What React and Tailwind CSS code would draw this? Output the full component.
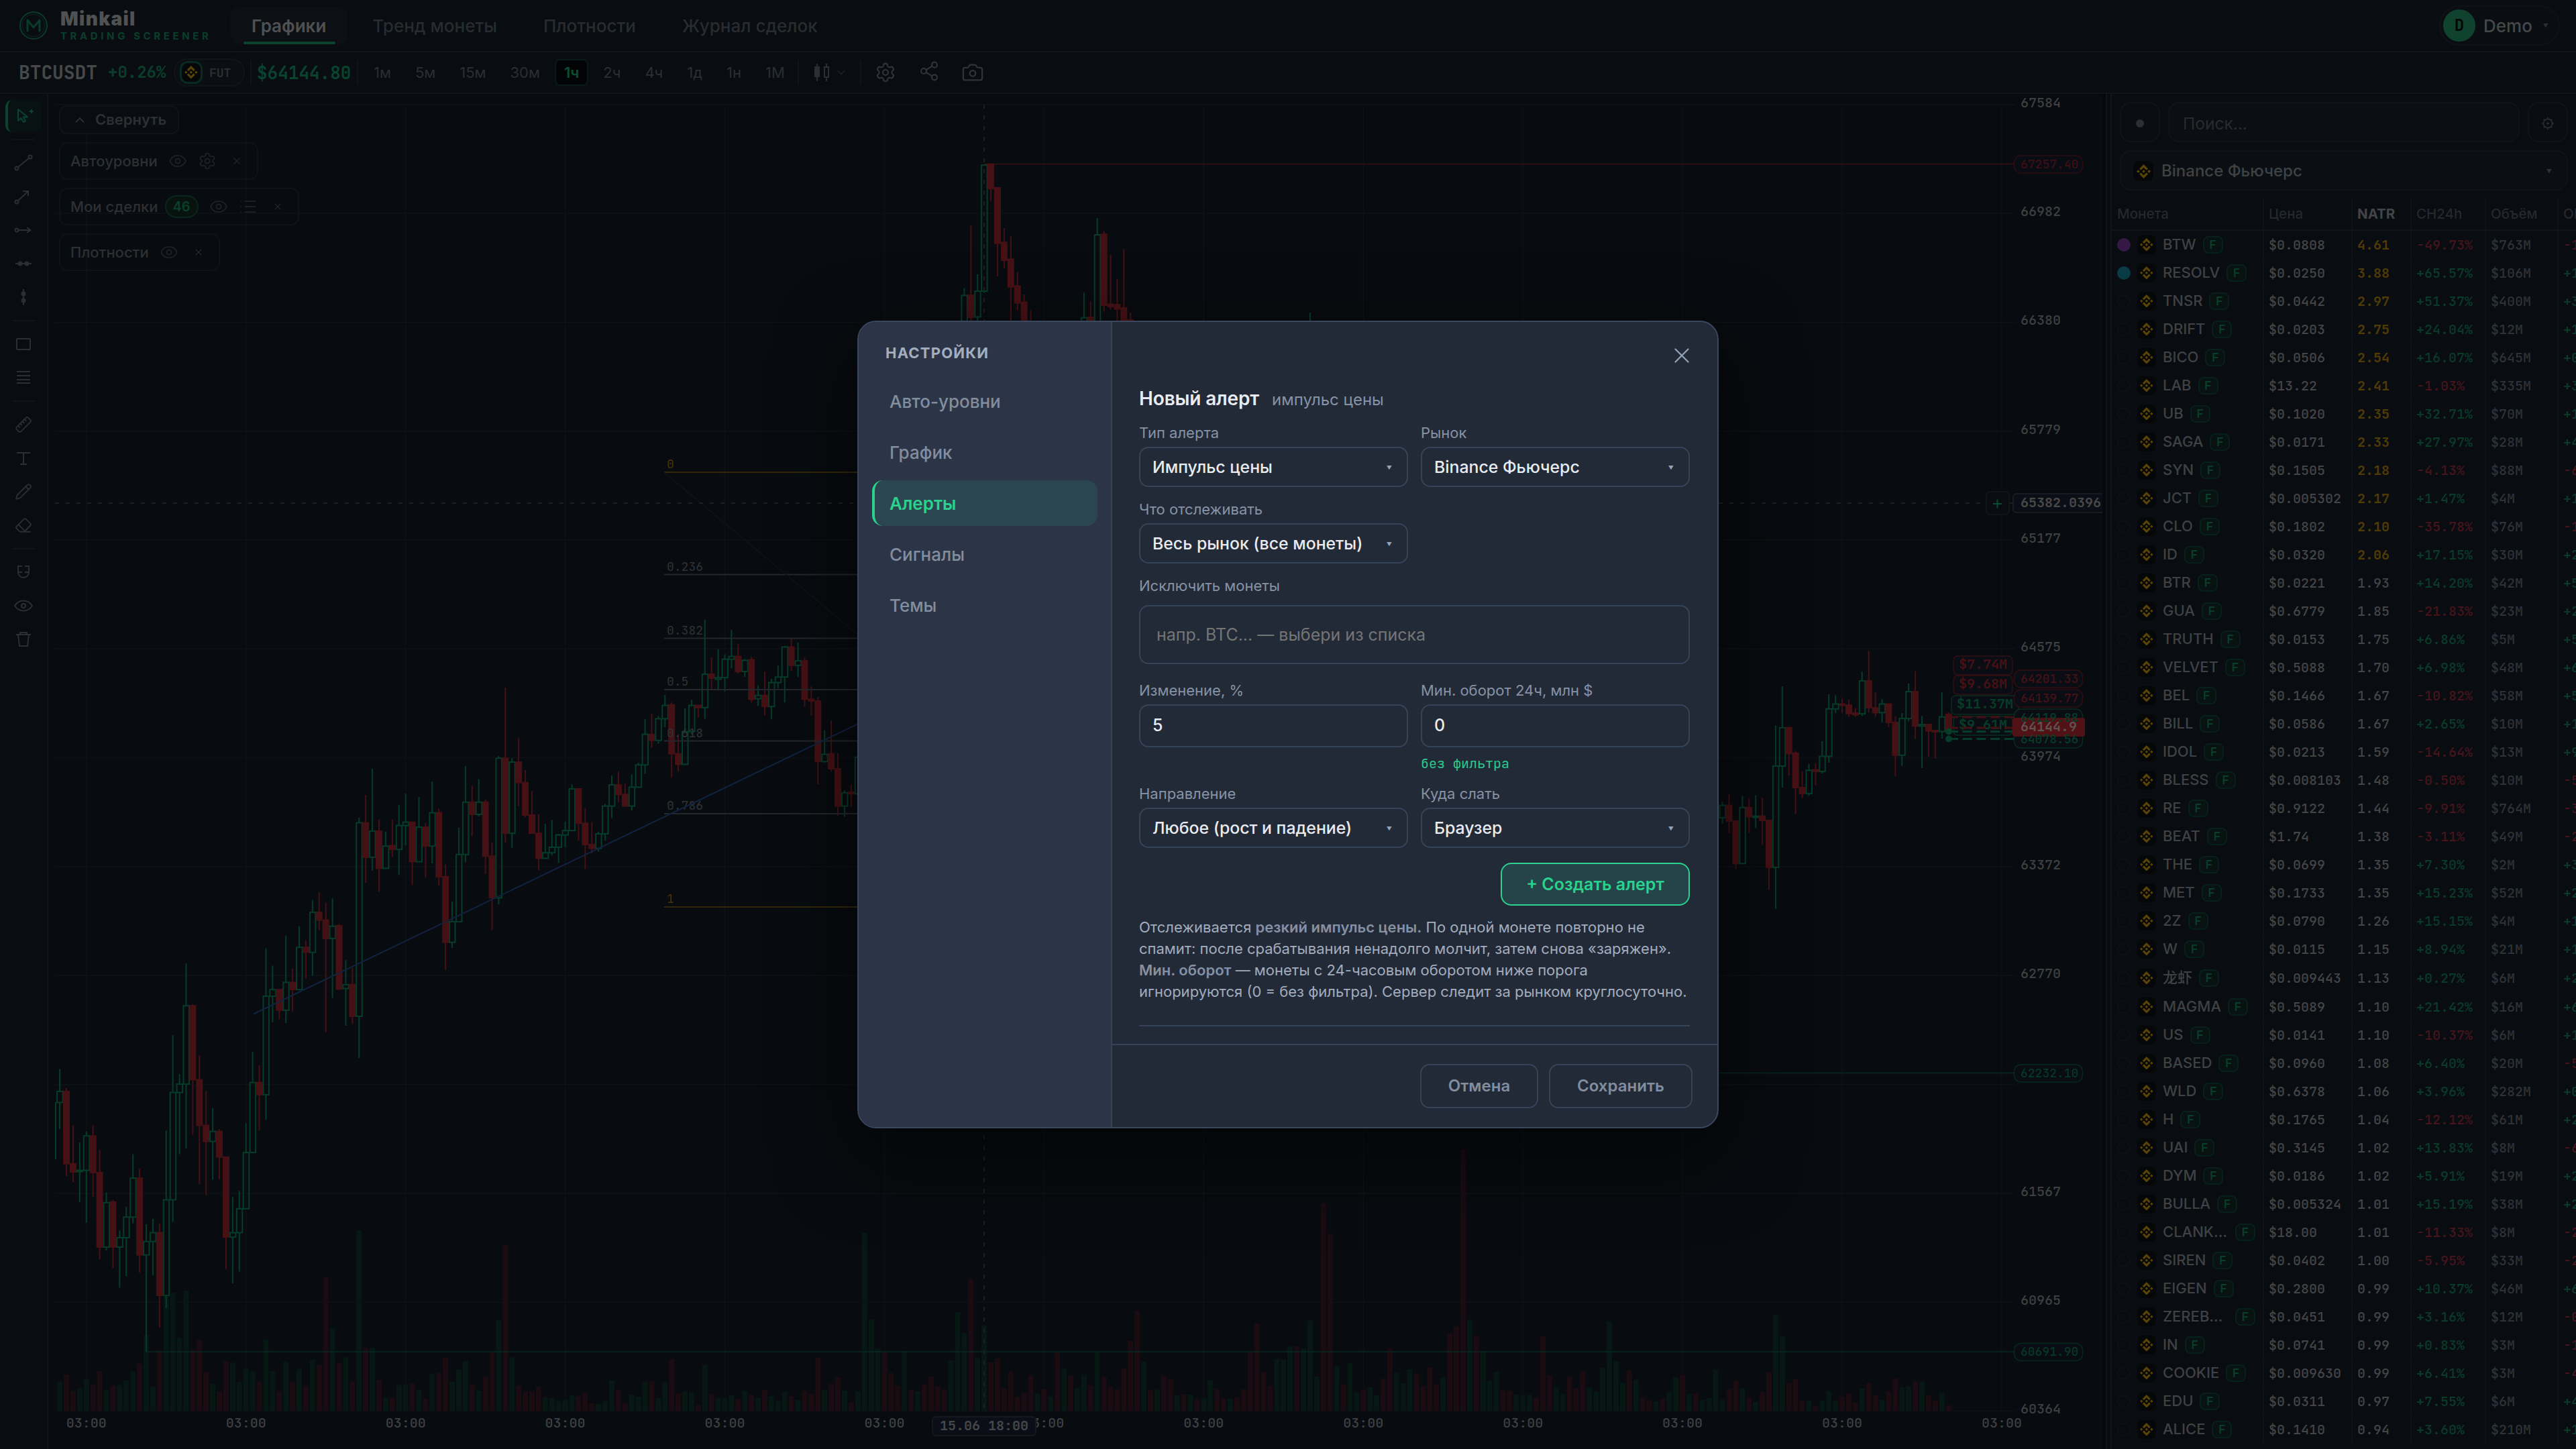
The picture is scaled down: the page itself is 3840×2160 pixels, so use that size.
import React from 'react'
import { Settings, Share2, Camera, ChevronDown, ChevronUp, Eye, List, X, Ruler, Pencil, Eraser } from 'lucide-react'
import { SiBinance } from 'react-icons/si'

const MONO = "font-['JetBrains_Mono','DejaVu_Sans_Mono',monospace]"
const MONO_FAMILY = "'JetBrains Mono', 'DejaVu Sans Mono', monospace"

const GREEN = '#063d29'
const RED = '#461115'

const TABS = ['Графики', 'Тренд монеты', 'Плотности', 'Журнал сделок']
const TIMEFRAMES = ['1м', '5м', '15м', '30м', '1ч', '2ч', '4ч', '1д', '1н', '1М']

// name, price, natr, change, volume, open interest
const COINS = [
  ['BTW', '$0.0808', '4.61', '-49.73%', '$763M', '-1.2%'],
  ['RESOLV', '$0.0250', '3.88', '+65.57%', '$106M', '+1.8%'],
  ['TNSR', '$0.0442', '2.97', '+51.37%', '$400M', '+3.1%'],
  ['DRIFT', '$0.0203', '2.75', '+24.04%', '$12M', '+1.4%'],
  ['BICO', '$0.0506', '2.54', '+16.07%', '$645M', '+0.6%'],
  ['LAB', '$13.22', '2.41', '-1.03%', '$335M', '+3.3%'],
  ['UB', '$0.1020', '2.35', '+32.71%', '$70M', '+1.1%'],
  ['SAGA', '$0.0171', '2.33', '+27.97%', '$28M', '+4.2%'],
  ['SYN', '$0.1505', '2.18', '-4.13%', '$88M', '-6.0%'],
  ['JCT', '$0.005302', '2.17', '+1.47%', '$4M', '+1.5%'],
  ['CLO', '$0.1802', '2.10', '-35.78%', '$76M', '-1.9%'],
  ['ID', '$0.0320', '2.06', '+17.15%', '$30M', '+2.2%'],
  ['BTR', '$0.0221', '1.93', '+14.20%', '$42M', '+5.4%'],
  ['GUA', '$0.6779', '1.85', '-21.83%', '$23M', '+2.7%'],
  ['TRUTH', '$0.0153', '1.75', '+6.86%', '$5M', '+5.1%'],
  ['VELVET', '$0.5088', '1.70', '+6.98%', '$48M', '+6.3%'],
  ['BEL', '$0.1466', '1.67', '-10.82%', '$58M', '+5.8%'],
  ['BILL', '$0.0586', '1.67', '+2.65%', '$10M', '+1.0%'],
  ['IDOL', '$0.0213', '1.59', '-14.64%', '$13M', '+9.2%'],
  ['BLESS', '$0.008103', '1.48', '-0.50%', '$10M', '-5.5%'],
  ['RE', '$0.9122', '1.44', '-9.91%', '$764M', '-3.6%'],
  ['BEAT', '$1.74', '1.38', '-3.11%', '$49M', '-2.4%'],
  ['THE', '$0.0699', '1.35', '+7.30%', '$2M', '+3.9%'],
  ['MET', '$0.1733', '1.35', '+15.23%', '$52M', '+2.1%'],
  ['2Z', '$0.0790', '1.26', '+15.15%', '$4M', '+1.3%'],
  ['W', '$0.0115', '1.15', '+8.94%', '$21M', '+1.7%'],
  ['龙虾', '$0.009443', '1.13', '+0.27%', '$6M', '+2.0%'],
  ['MAGMA', '$0.5089', '1.10', '+21.42%', '$16M', '+6.6%'],
  ['US', '$0.0141', '1.10', '-10.37%', '$6M', '+1.2%'],
  ['BASED', '$0.0960', '1.08', '+6.40%', '$20M', '-5.0%'],
  ['WLD', '$0.6378', '1.06', '+3.96%', '$282M', '+0.4%'],
  ['H', '$0.1765', '1.04', '-12.12%', '$61M', '+2.5%'],
  ['UAI', '$0.3145', '1.02', '+13.83%', '$8M', '-6.1%'],
  ['DYM', '$0.0186', '1.02', '+5.91%', '$19M', '+2.3%'],
  ['BULLA', '$0.005324', '1.01', '+15.19%', '$38M', '+2.8%'],
  ['CLANKER', '$18.00', '1.01', '-11.33%', '$8M', '-2.2%'],
  ['SIREN', '$0.0402', '1.00', '-5.95%', '$33M', '-2.9%'],
  ['EIGEN', '$0.2800', '0.99', '+10.37%', '$46M', '+6.0%'],
  ['ZEREBRO', '$0.0451', '0.99', '+3.16%', '$12M', '-0.7%'],
  ['IN', '$0.0741', '0.99', '+0.83%', '$3M', '-1.8%'],
  ['COOKIE', '$0.009630', '0.99', '+6.41%', '$3M', '-4.4%'],
  ['EDU', '$0.0311', '0.97', '+7.55%', '$6M', '+4.0%'],
  ['ALICE', '$0.1410', '0.94', '+3.60%', '$210M', '+1.6%'],
]

// Candles come in blocks with their own vertical scale: [up, high, top, bottom, low]
const EARLY = [
  [1,885,925,945,993],[0,919,925,1055,1077],[0,986,1055,1070,1088],[1,1017,1067,1069,1124],[1,997,1005,1067,1161],
  [0,985,1005,1071,1115],[0,1030,1071,1205,1227],[1,1107,1125,1205,1211],[0,1120,1124,1205,1243],[1,1175,1188,1205,1278],
  [1,1133,1151,1188,1257],[1,1038,1081,1151,1162],[0,1064,1081,1219,1251],[1,1164,1195,1219,1393],[1,1154,1179,1195,1256],
  [0,1162,1179,1292,1350],[1,995,1120,1292,1315],[1,824,927,1120,1160],[1,894,912,927,1038],[1,695,771,912,1028],
  [0,768,771,904,1003],[0,860,904,986,1092],[0,924,986,1015,1112],[1,955,997,1015,1084],[0,993,997,1043,1083],
  [0,1042,1043,1187,1244],[1,1115,1179,1187,1270],[1,1104,1136,1179,1249],[1,982,1035,1136,1136],[1,854,909,1035,1035],
  [0,878,909,931,995],[1,668,754,931,976],[1,699,742,754,801],[0,742,742,779,795],[1,645,729,779,802],
  [0,704,729,742,781],[1,628,666,742,742],[0,653,666,675,722],[1,581,603,675,717],[0,567,603,617,635],
  [0,586,617,650,819],[1,578,628,650,757],[0,624,627,741,741],[1,689,733,740,807],[0,703,733,790,804],
  [1,433,442,790,865],[0,392,442,504,550],[1,345,457,504,528],[0,436,457,524,566],[1,458,484,524,524],
  [0,436,483,490,504],[1,410,447,490,536],[1,390,441,447,483],[0,441,441,512,554],[1,396,450,512,512],
  [0,442,450,484,540],[1,368,424,484,515],[0,417,424,539,555],[0,517,539,657,707],[1,584,620,657,667],
  [1,451,499,620,620],[1,340,405,499,513],[0,375,405,427,466],[1,364,405,427,431],[0,400,405,502,534],
  [0,478,502,577,635],[1,322,326,577,589],[0,199,326,461,478],[1,326,333,461,487],[0,290,333,370,412],
  [0,347,370,428,432],[0,385,428,461,461],[0,427,461,506,527],[1,444,496,506,506],[1,437,486,496,501],
  [1,462,464,486,514],[1,440,456,464,486],[1,373,381,456,456],[0,380,381,443,474],[0,416,443,481,525],
  [0,441,481,488,497],[1,458,462,488,494],[1,408,412,462,474],[1,357,374,412,434],[0,350,374,391,405],
  [0,372,391,412,412],[1,355,378,412,420],[1,334,338,378,378],[1,256,283,338,354],[0,246,283,294,308],
  [1,250,255,294,300],[1,212,231,255,270],[0,226,230,318,361],[0,283,318,337,350],[1,236,278,337,337],
  [1,221,231,278,283],[0,230,231,235,253],[1,77,175,235,255],[0,145,175,182,203],[1,130,181,184,203],
  [1,139,148,181,206],[1,95,143,148,164],[0,120,143,170,174],[1,148,150,170,180],[0,144,149,220,226],
  [1,195,213,219,232],[0,170,213,233,249],[1,183,190,233,256],[1,159,180,190,200],[1,124,126,180,226],
  [0,110,126,159,169],[1,118,151,159,180],[0,145,151,220,233],[0,197,220,223,249],[0,216,223,332,373],
  [1,276,319,332,334],[0,258,318,345,350],[0,317,345,412,430],[1,384,388,412,431],[0,373,387,390,414],
  [1,324,324,390,390],
]

const PEAK = [
  [1,628,661,800,800],[0,349,660,759,800],[1,567,642,757,800],[1,75,78,642,650],[0,73,74,184,239],
  [0,178,179,428,575],[0,360,424,504,540],[0,397,499,623,800],[0,557,619,695,728],[0,657,691,800,800],[0,729,800,800,800],
]

const PEAK_2 = [
  [1,650,761,800,800],[0,687,759,800,800],[1,315,390,800,800],[0,374,388,705,734],[0,479,700,711,724],
  [0,589,702,722,800],[0,454,717,800,800],[0,738,771,800,800],
]

const LATE = [
  [1,367,374,397,408],[0,353,374,403,426],[0,403,403,482,492],[1,357,378,482,482],[0,362,378,395,425],
  [1,355,394,396,416],[0,360,394,402,447],[0,402,402,489,531],[1,226,301,489,566],[1,153,230,301,341],
  [0,228,230,278,319],[0,273,277,341,390],[0,311,341,352,361],[1,297,309,352,356],[0,296,308,311,337],
  [1,255,283,311,315],[1,168,195,283,295],[1,170,186,195,203],[0,176,186,188,203],[0,178,188,204,210],
  [0,194,203,206,210],[1,126,143,204,208],[0,87,143,193,202],[0,164,193,202,210],[1,177,186,202,220],
  [0,185,186,220,229],[0,209,220,281,320],[1,203,213,281,301],[1,148,163,213,218],[0,125,163,227,251],
  [1,208,224,227,305],[0,223,224,236,284],[0,235,235,237,287],[1,164,210,237,250],[0,202,205,232,232],
]

const BLOCKS = [
  { start: 0, origin: 860, scale: 0.82908, rows: EARLY },
  { start: 136, origin: 220, scale: 0.33333, rows: PEAK },
  { start: 154, origin: 220, scale: 0.33333, rows: PEAK_2 },
  { start: 250, origin: 900, scale: 0.80357, rows: LATE },
]

const VOLUME_EARLY = [
  1446,1433,1463,1458,1441,1451,1427,1461,1453,1452,1444,1428,1414,1362,1455,1390,1293,1286,1367,1282,1388,1371,1429,1449,1463,
  1409,1412,1446,1423,1427,1446,1370,1427,1463,1410,1447,1423,1453,1406,1415,1258,1350,1412,1402,1446,1174,1385,1385,1443,1475,
  1474,1452,1451,1449,1461,1477,1432,1430,1402,1446,1424,1409,1452,1462,1436,1393,1335,1200,1402,1453,1464,1464,1455,1474,1475,
  1481,1478,1470,1472,1466,1485,1486,1481,1444,1461,1484,1469,1473,1446,1445,1475,1447,1406,1467,1464,1465,1488,1416,1468,1475,
  1476,1470,1477,1463,1470,1475,1461,1472,1481,1464,1472,1479,1462,1467,1403,1461,1450,1438,
]

const VOLUME_MID = 'g1180 r1232 g1184 g475 g862 g991 r1010 r1101 r1159 g1006 r1176 g1184 r1155 r1117 r1161 r1175 g1045 g828 g922 r681 g1035 g888 r1054 r1036 r1169 r1094 r1208 r1188 r1112 g1192 r1174 g1206 r1010 g1082 r1112 g1170 g1109 r1157 g1008 r1119 r1161 r1174 r1081 r958 r824 g1052 r1178 g1175 r1114 r1129 g1200 r1197 g1198 r1221 g1212 g1134 r1172 r1217 g1217 r1210 r1174 r1007 r880 r1096 r1159 g1037 g1042 g983 r982 g993 g867 g1118 r342 r479 g1070 r1152 g1056 g1188 r1175 g1165 g1200 r1126 r992 g1100 g1148 g1085 r1107 r1160 r1076 r1152 g1121 r924 r894 r103 g863 r934 g1006 g1137 g1096 r1179 r1182 g1199 g1200 g1198 r1212 r936 r1112 g1164 g1196 r1118 r1169 r1095 g1167 g1185 g1078 g873 g1048 g1145 r1089 g1132 r1210 r1223 g1227 r1217 g1185 g1121 r1109 g1196 r1194 g1221 g1214'

const VOLUME_LATE = 'g1420 g1476 r1456 r1440 g1455 r1471 g1480 r1461 r1425 g1318 g1358 r1445 r1437 r1478 g1477 r1487 g1478 g1460 g1478 r1470 r1465 r1481 g1455 r1445 r1467 g1476 r1460 r1436 g1452 g1451 r1441 g1442 r1468 r1477 g1463 r1486'

const parseVolume = (text, base, scale) =>
  text.split(' ').map((v) => ({ up: v[0] === 'g', h: (base - Number(v.slice(1))) * scale }))

const VOLUMES = [
  ...VOLUME_EARLY.map((v, i) => ({ up: EARLY[i][0] === 1, h: (1499 - v) * 0.829 })),
  ...parseVolume(VOLUME_MID, 1272, 0.3333),
  ...parseVolume(VOLUME_LATE, 1497, 0.8036),
]

const PRICES = ['67584', '66982', '66380', '65779', '65177', '64575', '63974', '63372', '62770', null, '61567', '60965', '60364']
const FIBS = [
  ['0', 704, '#33290a'], ['0.236', 856.5, '#24272b'], ['0.382', 951.5, '#24272b'], ['0.5', 1028, '#24272b'],
  ['0.618', 1104.5, '#24272b'], ['0.786', 1213, '#24272b'], ['1', 1352, '#33290a'],
]
const SIZE_TAGS = [
  ['$7.74M', 2912, 978, 88, RED], ['$9.68M', 2912, 1007, 88, RED], ['$11.37M', 2909, 1037, 100, GREEN], ['$9.61M', 2912, 1068, 88, GREEN],
]
const PRICE_TAGS = [
  ['67257.40', 245, RED, 0.85], ['64201.33', 1012, RED, 1], ['64139.77', 1041, RED, 1], ['64119.88', 1070, GREEN, 1],
  ['64078.56', 1102, GREEN, 1], ['62232.10', 1600, GREEN, 0.9], ['60691.90', 2015.5, GREEN, 0.9],
]

const candleX = (i) => 89.1 + i * 9.914
const gridX = (k) => 128.8 + k * 237.93
const gridY = (k) => 155.8 + k * 162.3

const Candle = ({ x, row, origin, scale }) => {
  const [up, high, top, bottom, low] = row
  const y = (v) => origin + v * scale
  const color = up ? GREEN : RED
  const height = Math.max(y(bottom) - y(top), 2)
  return (
    <g stroke={color} strokeWidth="2">
      <path d={`M${x} ${y(high)}V${y(top)}M${x} ${y(bottom)}V${y(low)}`} />
      {up
        ? <rect x={x - 4} y={y(top)} width="8.5" height={height} fill="none" />
        : <rect x={x - 5} y={y(top) - 1} width="10" height={height + 2} fill={color} stroke="none" />}
    </g>
  )
}

const Chart = () => (
  <svg className="block" width="3067" height="2020" viewBox="72 140 3067 2020" fontFamily={MONO_FAMILY}>
    <g stroke="#0e1216" strokeWidth="1.5">
      {PRICES.map((_, k) => <path key={k} d={`M82 ${gridY(k)}H3004`} />)}
      {Array.from({ length: 13 }, (_, k) => <path key={k} d={`M${gridX(k)} 157V2103`} />)}
    </g>

    {VOLUMES.map((v, i) => (
      <rect key={i} x={candleX(i) - 4} y={2103.5 - v.h} width="8" height={v.h} fill={v.up ? '#071714' : '#1a0c11'} />
    ))}

    <path d="M1467 244.5H3004" stroke={RED} strokeWidth="1.5" opacity="0.8" />
    <path d="M1400 1599.5H3004M218 2015H3004" stroke="#082a20" strokeWidth="1.5" />
    <path d="M83 1643V1728" stroke={GREEN} strokeWidth="2" />

    {BLOCKS.map((b) => b.rows.map((row, i) => (
      <Candle key={b.start + i} x={candleX(b.start + i)} row={row} origin={b.origin} scale={b.scale} />
    )))}
    <path d="M1953 466V490" stroke={GREEN} strokeWidth="2" />

    {FIBS.map(([label, y, color]) => (
      <g key={label}>
        <path d={`M990 ${y}H1400`} stroke={color} strokeWidth="2" />
        <text x="994" y={y - 6} fontSize="18" fill={label === '1' || label === '0' ? '#43350c' : '#303336'}>{label}</text>
      </g>
    ))}
    <path d="M990 704L1300 964" stroke="#101417" strokeWidth="1.5" />
    <path d="M378 1511.5L1300 1069" stroke="#12233f" strokeWidth="2" />

    {/* crosshair */}
    <path d="M1467 156V2103" stroke="#1c2024" strokeWidth="2" strokeDasharray="6 10" />
    <path d="M82 750H3004" stroke="#1c2024" strokeWidth="2" strokeDasharray="6 10" />

    {SIZE_TAGS.map(([label, x, y, w, color]) => (
      <g key={label}>
        <rect x={x} y={y} width={w} height="28" rx="6" fill="#0c0e15" fillOpacity="0.7" stroke={color} strokeOpacity="0.65" strokeWidth="1.5" />
        <text x={x + 8} y={y + 18.5} fontSize="20" fontWeight="600" fill={color}>{label}</text>
      </g>
    ))}

    <g stroke={RED} strokeWidth="3" strokeDasharray="14 6.7">
      <path d="M2905 1069H3004M2905 1085H3004" />
      <path d="M2905 1090.5H3004M2905 1101.5H3004" stroke={GREEN} />
    </g>
    <rect x="2900" y="1064" width="10" height="26" rx="4" fill={RED} />
    <circle cx="2905" cy="1090.5" r="5" fill={GREEN} />
    <circle cx="2905" cy="1101.5" r="5" fill={GREEN} />

    {PRICES.map((p, k) => p && <text key={p} x="3012" y={gridY(k) + 4} fontSize="20" fontWeight="500" fill="#3e4043">{p}</text>)}

    {PRICE_TAGS.map(([label, y, color, opacity]) => (
      <rect key={label} x="3002.5" y={y - 13} width="102" height="26" rx="10" fill="#0a0d13" stroke={color} strokeOpacity="0.65" strokeWidth="1.5" opacity={opacity} />
    ))}
    <rect x="3000" y="1070" width="108" height="28" rx="4" fill="#511216" />
    {PRICE_TAGS.map(([label, y, color, opacity]) => (
      <text key={label} x="3012" y={y + 5.500} fontSize="18" fontWeight="500" fill={color} opacity={opacity}>{label}</text>
    ))}
    <text x="3012" y="1090" fontSize="20" fontWeight="600" fill="#5f5152">64144.9</text>

    <rect x="2961" y="733" width="34" height="34" rx="6" fill="#090d11" stroke="#10151a" strokeWidth="2" />
    <path d="M2971 751H2984M2977.500 744.500V757.500" stroke="#0b4a33" strokeWidth="2" />
    <rect x="3001" y="736" width="150" height="28" rx="5" fill="#0c0e17" stroke="#171b22" strokeWidth="2" />
    <text x="3012" y="756" fontSize="20" fontWeight="600" fill="#484949">65382.0396</text>
    <rect x="3134" y="140" width="6" height="2020" fill="#06090c" />

    {Array.from({ length: 13 }, (_, k) => (
      <text key={k} x={gridX(k)} y="2128" fontSize="20" fontWeight="500" textAnchor="middle" fill="#3e4043">03:00</text>
    ))}
    <rect x="1390" y="2112" width="154" height="28" rx="5" fill="#0c0e17" stroke="#14181f" strokeWidth="2" />
    <text x="1467" y="2132" fontSize="20" textAnchor="middle" fontWeight="600" fill="#464747">15.06 18:00</text>
  </svg>
)

const ExchangeIcon = ({ className }) => (
  <span className={`flex shrink-0 items-center justify-center bg-[#060708] text-[#594405] ${className}`}>
    <SiBinance className="h-[70%] w-[70%]" />
  </span>
)

const Header = () => (
  <header className="flex h-[78px] items-center border-b-2 border-[#10151a] bg-[#090d11] pl-7 pr-6">
    <svg className="h-[44px] w-[44px]" viewBox="0 0 44 44" fill="none" stroke="#093b29">
      <circle cx="22" cy="22" r="20" strokeWidth="2" />
      <circle cx="22" cy="22" r="16.500" strokeWidth="1" opacity="0.6" />
      <path d="M13 30V14L22 25L31 14V30" strokeWidth="3" strokeLinejoin="round" strokeLinecap="round" />
    </svg>
    <div className="ml-[18px] w-[238px]">
      <div className="text-[28px] font-black leading-[28px] tracking-[1.300px] text-[#505152]">Minkail</div>
      <div className="mt-[4px] whitespace-nowrap text-[15px] font-bold leading-4 tracking-[4.600px] text-[#093f2a]">TRADING SCREENER</div>
    </div>
    <nav className="ml-[15px] flex gap-[5px]">
      {TABS.map((tab, i) => (
        <div
          key={tab}
          className={`relative flex h-14 items-center rounded-xl px-8 text-[26px] ${i === 0 ? 'bg-[#0c1014] font-semibold text-[#4f5051]' : 'font-medium text-[#282b2f]'}`}
        >
          {tab}
          {i === 0 && <span className="absolute bottom-0 left-5 right-[18px] h-1 rounded-full bg-[#0b432e]" />}
        </div>
      ))}
    </nav>
    <div className="ml-auto flex h-[60px] w-[180px] items-center rounded-full border-2 border-[#0e1317] bg-[#0a0e12] pl-1">
      <span className={`flex h-12 w-12 items-center justify-center rounded-full bg-[#10432f] text-[24px] font-bold text-[#030504] ${MONO}`}>D</span>
      <span className="ml-3 text-[26px] font-medium text-[#46484a]">Demo</span>
      <span className="ml-4 text-[8px] text-[#2b2e32]">▼</span>
    </div>
  </header>
)

const Divider = () => <span className="h-9 w-0.5 bg-[#0f1418]" />

const Toolbar = () => (
  <div className="flex h-[62px] items-center border-b-2 border-[#10151a] bg-[#090d11] pl-7">
    <span className={`w-[117px] text-[28px] font-bold tracking-[-0.1px] text-[#474849] ${MONO}`}>BTCUSDT</span>
    <span className={`ml-4 w-[88px] text-[24px] font-semibold text-[#0a3d2a] ${MONO}`}>+0.26%</span>
    <span className="ml-[10px] flex h-[42px] w-[106px] items-center rounded-[20px] border-2 border-[#0f1418] bg-[#0b0f13] pl-[7px]">
      <ExchangeIcon className="h-[34px] w-[34px] rounded-[12px] border-[3px] border-[#092a20]" />
      <span className={`ml-[10px] text-[18px] font-bold text-[#2b2e32] ${MONO}`}>FUT</span>
    </span>
    <span className="ml-2 flex"><Divider /></span>
    <span className={`ml-[8px] w-[142px] text-[26px] font-semibold text-[#0a432e] ${MONO}`}>$64144.80</span>
    <span className="ml-[7px] flex"><Divider /></span>
    <div className="ml-[9px] flex items-center gap-2">
      {TIMEFRAMES.map((tf) => (
        <span
          key={tf}
          className={`flex h-10 items-center rounded-lg border-2 px-3 text-[22px] ${tf === '1ч' ? 'border-[#081a16] bg-[#030405] font-semibold text-[#0b4d35]' : 'border-transparent text-[#2b2e32]'}`}
        >
          {tf}
        </span>
      ))}
    </div>
    <span className="ml-[5px] flex"><Divider /></span>
    <svg className="ml-[22px] h-7 w-6" viewBox="0 0 24 28" fill="none" stroke="#2b2e32" strokeWidth="2">
      <path d="M5 1V27M19 1V6M19 21V27" />
      <rect x="2" y="6" width="6" height="14" fill="#2b2e32" />
      <rect x="16" y="6" width="6" height="15" />
    </svg>
    <ChevronDown className="ml-[7px] h-5 w-5 text-[#1d2024]" />
    <span className="ml-[18px] flex"><Divider /></span>
    <Settings className="ml-5 h-[32px] w-[32px] text-[#303337]" strokeWidth={1.6} />
    <Share2 className="-mt-1 ml-[33px] h-[32px] w-[32px] text-[#303337]" strokeWidth={1.6} />
    <Camera className="ml-[32px] h-[34px] w-[34px] text-[#303337]" strokeWidth={1.6} />
  </div>
)

const TOOLS = [
  <g key="t"><circle cx="5" cy="23" r="2.500" /><circle cx="25" cy="6" r="2.500" /><path d="M7 21L23 8" /></g>,
  <g key="a"><circle cx="5" cy="23" r="2.500" /><path d="M7 21L21 8M14 7H22V14" /></g>,
  <g key="r"><circle cx="5" cy="15" r="2.500" /><path d="M8 15H25M20 11L25.500 15L20 19" /></g>,
  <g key="h"><path d="M3 15H27" /><circle cx="10" cy="15" r="2.500" fill="#2b2e32" /><circle cx="20" cy="15" r="2.500" fill="#2b2e32" /></g>,
  <g key="v"><path d="M15 3V27" /><circle cx="15" cy="10" r="2.500" fill="#2b2e32" /><circle cx="15" cy="20" r="2.500" fill="#2b2e32" /></g>,
  null,
  <rect key="b" x="5" y="7" width="20" height="16" rx="1" />,
  <path key="f" d="M5 6H25M5 12H25M5 18H25M5 23H25" />,
  null,
  'ruler',
  <path key="tx" d="M5 7H25M15 7V24M10 24H20" />,
  'pencil',
  'eraser',
  null,
  <path key="m" d="M13 6H7V15A8 8 0 0 0 23 15V6H17M7 15H13M17 15H23" />,
  <g key="e"><path d="M2 15C8 5 22 5 28 15C22 25 8 25 2 15Z" /><circle cx="15" cy="15" r="3" /></g>,
  <path key="d" d="M4 8H26M10 8V5H20V8M7 8L9 25H21L23 8" />,
]

const TOOL_ICONS = { ruler: Ruler, pencil: Pencil, eraser: Eraser }

const DrawTools = () => (
  <aside className="flex w-[72px] shrink-0 flex-col items-center gap-0.5 border-r-2 border-[#10151a] bg-[#090d11] pt-[9px]">
    <span className="flex h-12 w-[54px] items-center justify-center rounded-[10px] border-l-4 border-[#0b432e] bg-[#091213]">
      <svg className="h-7 w-7" viewBox="0 0 28 28" fill="none" stroke="#0b432e" strokeWidth="2" strokeLinejoin="round">
        <path d="M4 4V21L8.500 17L12 23L15 21.500L12 15.500H18Z" />
        <path d="M21 7H27M24 4V10" />
      </svg>
    </span>
    <span className="my-2 h-0.5 w-[34px] bg-[#10151a]" />
    {TOOLS.map((tool, i) => {
      if (!tool) return <span key={i} className="my-2 h-0.5 w-[34px] bg-[#10151a]" />
      const Icon = TOOL_ICONS[tool]
      return (
        <span key={i} className="flex h-12 w-[54px] items-center justify-center text-[#2b2e32]">
          {Icon
            ? <Icon className={`h-[26px] w-[26px] ${tool === 'ruler' ? '-scale-x-100' : ''}`} strokeWidth={1.8} />
            : <svg className="h-[30px] w-[30px]" viewBox="0 0 30 30" fill="none" stroke="currentColor" strokeWidth="2">{tool}</svg>}
        </span>
      )
    })}
  </aside>
)

const LAYERS = [
  { title: 'Автоуровни', icons: [Eye, Settings] },
  { title: 'Мои сделки', badge: '46', icons: [Eye, List] },
  { title: 'Плотности', icons: [Eye] },
]

const Layers = () => (
  <div className="absolute left-4 top-[17px] flex flex-col items-start text-[22px] font-medium text-[#2d3034]">
    <div className="flex h-[43px] items-center rounded-xl border-2 border-[#0f1418] bg-[#090c11] pl-[18px] pr-[17px] font-semibold">
      <ChevronUp className="h-[22px] w-[22px]" />
      <span className="ml-3">Свернуть</span>
    </div>
    {LAYERS.map((layer) => (
      <div key={layer.title} className="mt-3 flex h-14 items-center rounded-xl border-2 border-[#0e1317] pl-[15px] pr-2">
        {layer.title}
        {layer.badge && (
          <span className="ml-[10px] flex h-[34px] w-[50px] items-center justify-center rounded-full border-2 border-[#08261c] bg-[#081310] text-[20px] font-semibold text-[#09402b]">
            {layer.badge}
          </span>
        )}
        <span className="ml-2 flex text-[#1e2226]">
          {layer.icons.map((Icon, i) => (
            <span key={i} className="flex w-11 justify-center"><Icon className="h-7 w-7" strokeWidth={1.6} /></span>
          ))}
          <span className="flex w-11 items-center justify-center"><X className="h-4 w-4" strokeWidth={2.4} /></span>
        </span>
      </div>
    ))}
  </div>
)

const GRID = 'grid grid-cols-[225px_132px_88px_111px_108px_60px]'
const CELL = 'flex items-center border-l-2 border-[#0e1216] pl-[7px]'

const Screener = () => (
  <aside className="w-[694px] shrink-0 overflow-hidden border-l-2 border-[#10151a] bg-[#090c11]">
    <div className="flex gap-3 px-3 pt-3">
      <span className="flex h-[60px] w-[60px] items-center justify-center rounded-2xl border-2 border-[#0f1418] bg-[#0a0e12]">
        <span className="mt-1 h-3 w-3 rounded-full bg-[#2b2e32]" />
      </span>
      <span className="flex h-[60px] w-[524px] items-center rounded-2xl border-2 border-[#0f1418] bg-[#0b0f13] pl-5 pt-1 text-[24.500px] text-[#282b2f]">Поиск...</span>
      <span className="flex h-[60px] w-[60px] items-center justify-center rounded-2xl border-2 border-[#0f1418] bg-[#0a0e12] pt-1">
        <svg className="h-5 w-5" viewBox="0 0 24 24" fill="none" stroke="#2b2e32" strokeWidth="2">
          <circle cx="12" cy="12" r="8" />
          <circle cx="12" cy="12" r="1" />
          <path d="M12 1V4M12 20V23M1 12H4M20 12H23M4.500 4.500L6 6M18 18L19.500 19.500M4.500 19.500L6 18M18 6L19.500 4.500" />
        </svg>
      </span>
    </div>
    <div className="mx-3 mt-3 flex h-[60px] w-[668px] items-center rounded-2xl border-2 border-[#0f1418] bg-[#0b0f13] pl-[18px] pr-[22px] pt-0.5 text-[24px] font-medium text-[#3f4245]">
      <ExchangeIcon className="mr-[12px] h-[30px] w-[30px] rounded-lg" />
      Binance Фьючерс
      <span className="ml-auto text-[8px] text-[#2f3236]">▼</span>
    </div>

    <div className={`mt-3 h-12 border-b-2 border-[#10151a] text-[20.500px] font-medium text-[#25282c] ${GRID}`}>
      <span className="flex items-center pl-2">Монета</span>
      <span className={CELL}>Цена</span>
      <span className={`${CELL} font-bold text-[#424447]`}>NATR</span>
      <span className={CELL}>CH24h</span>
      <span className={CELL}>Объём</span>
      <span className={CELL}>OI</span>
    </div>
    {COINS.map(([name, price, natr, change, volume, oi], i) => (
      <div key={name} className={`border-b border-[#0b0f13] text-[20px] text-[#2f3236] ${name === '龙虾' ? 'h-11' : 'h-[42px]'} ${GRID} ${MONO}`}>
        <span className="flex items-center pl-2 font-['Inter','Noto_Sans_CJK_SC',sans-serif]">
          <span className={`h-5 w-5 shrink-0 rounded-full ${i === 0 ? 'bg-[#351846]' : i === 1 ? 'bg-[#093b45]' : 'border-2 border-[#0e1216]'}`} />
          <ExchangeIcon className="ml-[10px] h-7 w-7 rounded-lg" />
          <span className="ml-[10px] max-w-[98px] truncate text-[22px] font-medium text-[#3f4144]">{name}</span>
          <span className={`ml-[10px] flex h-[26px] w-[30px] shrink-0 items-center justify-center rounded-lg border-2 border-[#08201b] bg-[#081211] text-[18px] font-bold leading-none text-[#0a3d2a] ${MONO}`}>F</span>
        </span>
        <span className={`${CELL} font-medium text-[#434548]`}>{price}</span>
        <span className={`${CELL} ${Number(natr) >= 2 ? 'font-bold text-[#4e3c07]' : 'font-medium text-[#434548]'}`}>{natr}</span>
        <span className={`${CELL} font-medium ${change[0] === '+' ? 'text-[#0a3b29]' : 'text-[#46141b]'}`}>{change}</span>
        <span className={`${CELL} font-medium`}>{volume}</span>
        <span className={`${CELL} font-medium ${oi[0] === '+' ? 'text-[#0a3b29]' : 'text-[#46141b]'}`}>{oi}</span>
      </div>
    ))}
  </aside>
)

const Field = ({ label, hint, children }) => (
  <div>
    <div className="text-[22px] leading-[26px] text-[#8793a5]">{label}</div>
    <div className="mt-2">{children}</div>
    {hint && <div className={`mt-3 text-[20px] leading-6 text-[#2bcb8e] ${MONO}`}>{hint}</div>}
  </div>
)

const Select = ({ value }) => (
  <div className="flex h-[60px] items-center justify-between rounded-[14px] border-2 border-[#364358] pl-[18px] pr-[22px] pt-0.5 text-[24.800px] font-medium text-[#e8ebf1]">
    {value}
    <span className="text-[8px] text-[#94a3b8]">▼</span>
  </div>
)

const Input = ({ value }) => (
  <div className="flex h-16 items-center rounded-[14px] border-2 border-[#364358] pl-[18px] text-[25px] font-medium text-[#e8ebf1]">{value}</div>
)

const MENU = ['Авто-уровни', 'График', 'Алерты', 'Сигналы', 'Темы']

const SettingsModal = () => (
  <div className="absolute left-[1278px] top-[478px] flex h-[1204px] w-[1284px] overflow-hidden rounded-[28px] border-2 border-[#3a475d] bg-[#222a38] shadow-[0_40px_120px_rgba(0,0,0,0.6)]">
    <aside className="w-[378px] shrink-0 border-r-2 border-[#364358] bg-[#2b3547] px-5 pt-8">
      <div className="pl-5 text-[22px] font-bold leading-7 tracking-[1.200px] text-[#a3afc0]">НАСТРОЙКИ</div>
      <div className="mt-6 flex flex-col gap-2">
        {MENU.map((item) => (
          <div
            key={item}
            className={`flex h-[68px] items-center rounded-2xl border-l-4 pl-[22px] text-[26px] ${item === 'Алерты' ? 'border-[#2bd18f] bg-[#2b4650] font-semibold text-[#2bd18f]' : 'border-transparent font-medium text-[#828d9e]'}`}
          >
            {item}
          </div>
        ))}
      </div>
    </aside>

    <section className="relative flex flex-1 flex-col">
      <X className="absolute right-[34px] top-[31px] h-[38px] w-[38px] text-[#94a3b8]" strokeWidth={1.4} />
      <div className="flex-1 pl-10 pr-[41px] pt-[97px]">
        <div className="flex items-baseline leading-[34px]">
          <h2 className="text-[28px] font-semibold tracking-[-0.15px] text-[#e8ebf1]">Новый алерт</h2>
          <span className="ml-[19px] text-[24px] text-[#8793a5]">импульс цены</span>
        </div>
        <div className="mt-[19px] grid grid-cols-2 gap-x-[19px] gap-y-5">
          <Field label="Тип алерта"><Select value="Импульс цены" /></Field>
          <Field label="Рынок"><Select value="Binance Фьючерс" /></Field>
          <Field label="Что отслеживать"><Select value="Весь рынок (все монеты)" /></Field>
        </div>
        <div className="mt-5 text-[22px] leading-[26px] text-[#8793a5]">Исключить монеты</div>
        <div className="mt-4 flex h-[88px] items-center rounded-[14px] border-2 border-[#364358] pl-6 pt-0.5 text-[25px] text-[#757575]">напр. BTC... — выбери из списка</div>
        <div className="mt-[26px] grid grid-cols-2 gap-x-[19px] gap-y-5">
          <Field label="Изменение, %"><Input value="5" /></Field>
          <Field label="Мин. оборот 24ч, млн $" hint="без фильтра"><Input value="0" /></Field>
          <Field label="Направление"><Select value="Любое (рост и падение)" /></Field>
          <Field label="Куда слать"><Select value="Браузер" /></Field>
        </div>
        <div className="mt-[22px] flex justify-end">
          <button className="flex h-16 w-[282px] items-center justify-center rounded-2xl border-2 border-[#2bd18f] bg-[#244449] pt-0.5 text-[25px] font-semibold text-[#2bd18f]">+ Создать алерт</button>
        </div>
        <p className="mt-4 whitespace-nowrap text-[22px] leading-8 text-[#a3adbd]">
          Отслеживается <b className="font-semibold text-[#8490a3]">резкий импульс цены.</b> По одной монете повторно не<br />
          спамит: после срабатывания ненадолго молчит, затем снова «заряжен».<br />
          <b className="font-semibold text-[#8490a3]">Мин. оборот</b> — монеты с 24-часовым оборотом ниже порога<br />
          игнорируются (0 = без фильтра). Сервер следит за рынком круглосуточно.
        </p>
        <div className="mt-[34px] h-0.5 bg-[#364358]" />
      </div>
      <footer className="flex h-[124px] shrink-0 items-center justify-end gap-4 border-t-2 border-[#364358] pr-[37px] text-[24px] font-semibold text-[#828d9e]">
        <button className="h-[66px] w-[176px] rounded-[14px] border-2 border-[#364358]">Отмена</button>
        <button className="h-[66px] w-[214px] rounded-[14px] border-2 border-[#364358]">Сохранить</button>
      </footer>
    </section>
  </div>
)

const App = () => {
  return (
    <div className="relative flex h-[2160px] w-[3840px] flex-col overflow-hidden bg-[#080b0f] font-['Inter',sans-serif]">
      <Header />
      <Toolbar />
      <main className="flex h-[2020px]">
        <DrawTools />
        <div className="relative w-[3069px] shrink-0 border-r-2 border-[#10151a]">
          <Chart />
          <Layers />
        </div>
        <span className="w-[5px] shrink-0" />
        <Screener />
      </main>
      <SettingsModal />
    </div>
  )
}

export default App
